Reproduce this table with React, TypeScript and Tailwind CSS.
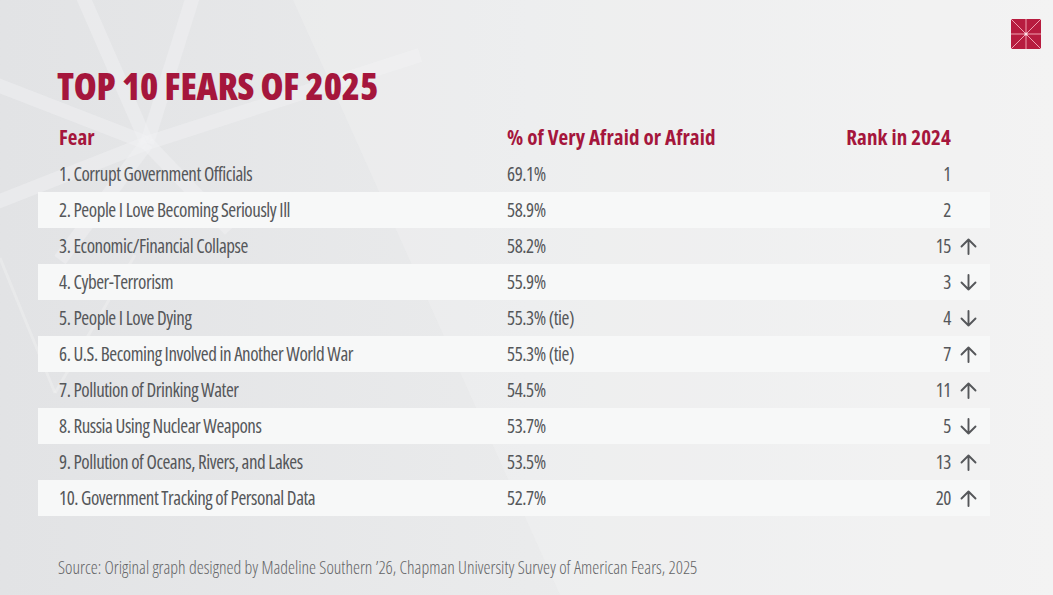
type Fear = {
    label: string;
    pct: string;
    rank: string;
    move?: "up" | "down";
};

const fears: Fear[] = [
    { label: "1. Corrupt Government Officials", pct: "69.1%", rank: "1" },
    { label: "2. People I Love Becoming Seriously Ill", pct: "58.9%", rank: "2" },
    { label: "3. Economic/Financial Collapse", pct: "58.2%", rank: "15", move: "up" },
    { label: "4. Cyber-Terrorism", pct: "55.9%", rank: "3", move: "down" },
    { label: "5. People I Love Dying", pct: "55.3% (tie)", rank: "4", move: "down" },
    { label: "6. U.S. Becoming Involved in Another World War", pct: "55.3% (tie)", rank: "7", move: "up" },
    { label: "7. Pollution of Drinking Water", pct: "54.5%", rank: "11", move: "up" },
    { label: "8. Russia Using Nuclear Weapons", pct: "53.7%", rank: "5", move: "down" },
    { label: "9. Pollution of Oceans, Rivers, and Lakes", pct: "53.5%", rank: "13", move: "up" },
    { label: "10. Government Tracking of Personal Data", pct: "52.7%", rank: "20", move: "up" },
];

function Arrow({ dir }: { dir: "up" | "down" }) {
    return (
        <svg width="17" height="17" viewBox="0 0 17 17" fill="none" stroke="currentColor" strokeWidth="1.9" strokeLinecap="round" strokeLinejoin="round">
            {dir === "up" ? (
                <path d="M8.5 16V1.5M1.5 8.5l7-7 7 7" />
            ) : (
                <path d="M8.5 1v14.5M1.5 8.5l7 7 7-7" />
            )}
        </svg>
    );
}

function Backdrop() {
    // faint star lines of the slide template, top left
    const cx = 147;
    const cy = 143;
    const ends = [
        [80, -10],
        [195, -10],
        [-10, 82],
        [420, 55],
        [-10, 205],
        [230, 230],
        [60, 260],
    ];
    return (
        <svg className="pointer-events-none absolute inset-0" width="1053" height="595" viewBox="0 0 1053 595">
            {ends.map(([x, y], i) => (
                <line key={i} x1={cx} y1={cy} x2={x} y2={y} stroke="#f2f2f3" strokeOpacity="0.45" strokeWidth="14" />
            ))}
            <polygon points="293,0 1053,0 1053,595 560,595" fill="#f6f6f6" fillOpacity="0.25" />
            <line x1="0" y1="258" x2="55" y2="393" stroke="#f2f2f3" strokeOpacity="0.4" strokeWidth="3" />
            <line x1="55" y1="393" x2="135" y2="255" stroke="#f2f2f3" strokeOpacity="0.4" strokeWidth="3" />
        </svg>
    );
}

function Logo() {
    return (
        <svg width="30" height="30" viewBox="0 0 30 30" className="absolute right-[12px] top-[19px]">
            <rect width="30" height="30" fill="#b71c3f" />
            <g stroke="#f0a0b0" strokeWidth="1">
                <line x1="15" y1="0" x2="15" y2="30" />
                <line x1="0" y1="15" x2="30" y2="15" />
                <line x1="0" y1="0" x2="30" y2="30" />
                <line x1="30" y1="0" x2="0" y2="30" />
            </g>
            <circle cx="15" cy="15" r="1.6" fill="#fbe3e8" />
        </svg>
    );
}

export default function App() {
    return (
        <div className="relative h-[595px] w-[1053px] overflow-hidden bg-gradient-to-r from-[#e2e3e5] via-[#eaebec] to-[#f2f2f2] font-['Open_Sans',sans-serif] font-stretch-condensed">
            <Backdrop />
            <Logo />

            <div className="relative flex flex-col pt-[63px]">
                <h1 className="pl-[57px] text-[37px] font-extrabold leading-[46px] tracking-[-0.2px] text-[#a5163c]">
                    TOP 10 FEARS OF 2025
                </h1>

                <div className="ml-[38px] mt-[11px] w-[952px]">
                    <div className="flex h-[36px] items-center pl-[21px] pr-[13px] text-[21px] font-bold tracking-[0.1px] text-[#a5163c]">
                        <span className="w-[448px]">Fear</span>
                        <span className="flex-1">% of Very Afraid or Afraid</span>
                        <span className="w-[160px] text-right">Rank in 2024</span>
                        <span className="w-[26px]" />
                    </div>

                    {fears.map((f, i) => (
                        <div
                            key={f.label}
                            className={
                                "flex h-[36px] items-center pl-[21px] pr-[13px] text-[19px] font-medium tracking-[-0.45px] text-[#55575a] " +
                                (i % 2 === 1 ? "bg-[#f7f8f8]" : "")
                            }
                        >
                            <span className="w-[448px]">{f.label}</span>
                            <span className="flex-1">{f.pct}</span>
                            <span className="w-[60px] text-right">{f.rank}</span>
                            <span className="ml-[9px] flex w-[17px] items-center justify-center">
                                {f.move && <Arrow dir={f.move} />}
                            </span>
                        </div>
                    ))}
                </div>

                <p className="mt-[40px] pl-[58px] text-[17.7px] font-light leading-[22px] text-[#646567]">
                    Source: Original graph designed by Madeline Southern &rsquo;26, Chapman University Survey of American Fears, 2025
                </p>
            </div>
        </div>
    );
}
